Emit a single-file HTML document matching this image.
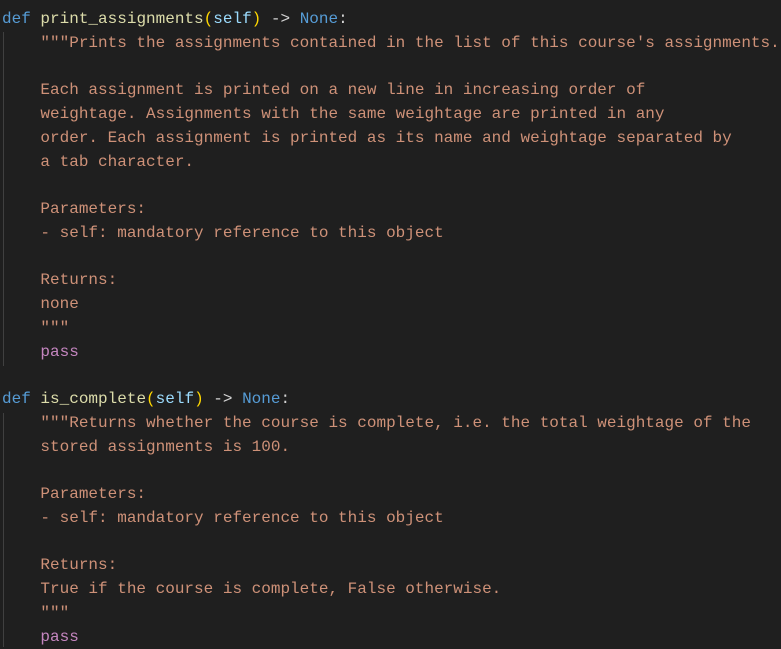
<!DOCTYPE html>
<html><head><meta charset="utf-8"><style>
html,body{margin:0;padding:0;background:#1f1f1f;width:781px;height:647px;overflow:hidden}
pre{margin:0;position:absolute;left:2px;top:8px;font-family:"Liberation Mono",monospace;font-size:16px;line-height:23.75px;color:#d4d4d4;white-space:pre}
.k{color:#569cd6}.f{color:#dcdcaa}.p{color:#ffd700}.s{color:#9cdcfe}.q{color:#ce9178}.c{color:#c586c0}
.g{position:absolute;left:3px;width:1px;background:#404040}
</style></head><body>
<div class="g" style="top:32px;height:334px"></div>
<div class="g" style="top:413px;height:234px"></div>
<pre><span class="k">def</span> <span class="f">print_assignments</span><span class="p">(</span><span class="s">self</span><span class="p">)</span> -&gt; <span class="k">None</span>:
<span class="q">    """Prints the assignments contained in the list of this course's assignments.

    Each assignment is printed on a new line in increasing order of
    weightage. Assignments with the same weightage are printed in any
    order. Each assignment is printed as its name and weightage separated by
    a tab character.

    Parameters:
    - self: mandatory reference to this object

    Returns:
    none
    """</span>
    <span class="c">pass</span>

<span class="k">def</span> <span class="f">is_complete</span><span class="p">(</span><span class="s">self</span><span class="p">)</span> -&gt; <span class="k">None</span>:
<span class="q">    """Returns whether the course is complete, i.e. the total weightage of the
    stored assignments is 100.

    Parameters:
    - self: mandatory reference to this object

    Returns:
    True if the course is complete, False otherwise.
    """</span>
    <span class="c">pass</span>
</pre>
</body></html>
